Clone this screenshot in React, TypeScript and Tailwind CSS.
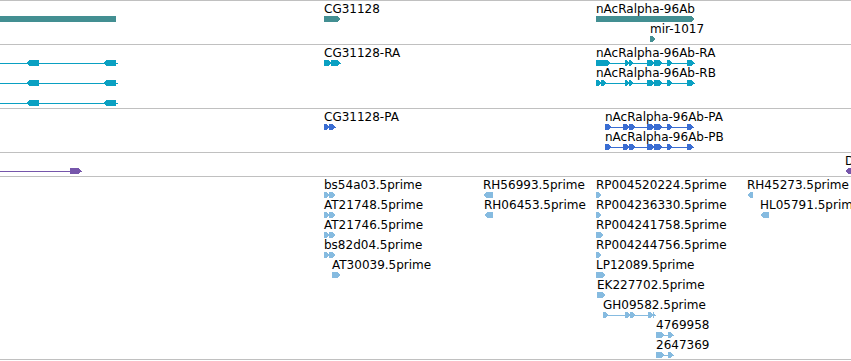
import React from 'react';

type Span = [number, number];

type Feature = {
  x: number;
  row: number;
  label?: string;
  w: number;
  exons: Span[];
  strand: 1 | -1 | 0;
  line?: boolean;
};

type Track = {
  height: string;
  color: string;
  features: Feature[];
};

const teal = '#438f92';
const cyan = '#0aa0c2';
const blue = '#3a6dd2';
const purple = '#7656ab';
const est = '#86bbe0';

function exonPoints([s, e]: Span, strand: number) {
  const tip = Math.min(3, (e - s) / 2);
  if (strand > 0) return `${s},0 ${e - tip},0 ${e},3 ${e - tip},6 ${s},6`;
  if (strand < 0) return `${s},3 ${s + tip},0 ${e},0 ${e},6 ${s + tip},6`;
  return `${s},0 ${e},0 ${e},6 ${s},6`;
}

function Glyph({ f, color }: { f: Feature; color: string }) {
  return (
    <svg width={f.w + 1} height={6} className="block" shapeRendering="crispEdges">
      {f.line && <rect x={0} y={3} width={f.w + 1} height={1} fill={color} />}
      {f.exons.map((ex, i) => (
        <polygon key={i} points={exonPoints(ex, f.strand)} fill={color} />
      ))}
    </svg>
  );
}

const dbl: Span[] = [[0, 5], [5, 11]];

const tracks: Track[] = [
  {
    height: 'h-[45px] border-t',
    color: teal,
    features: [
      { x: 0, row: 0, w: 116, exons: [[0, 116]], strand: 0 },
      { x: 324, row: 0, label: 'CG31128', w: 16, exons: [[0, 16]], strand: 1 },
      { x: 596, row: 0, label: 'nAcRalpha-96Ab', w: 98, exons: [[0, 98]], strand: 1 },
      { x: 650, row: 1, label: 'mir-1017', w: 5, exons: [[0, 5]], strand: 1 },
    ],
  },
  {
    height: 'h-[64px]',
    color: cyan,
    features: [
      ...[0, 1, 2].map(row => ({ x: 0, row, w: 117, exons: [[26, 39], [103, 116]] as Span[], strand: -1 as const, line: true })),
      { x: 324, row: 0, label: 'CG31128-RA', w: 16, exons: [[0, 7], [7, 16]], strand: 1, line: true },
      {
        x: 596, row: 0, label: 'nAcRalpha-96Ab-RA', w: 98, strand: 1, line: true,
        exons: [[0, 14], [29, 33], [33, 37], [51, 58], [58, 66], [71, 76], [91, 98]],
      },
      {
        x: 596, row: 1, label: 'nAcRalpha-96Ab-RB', w: 98, strand: 1, line: true,
        exons: [[0, 5], [5, 10], [29, 33], [33, 37], [51, 58], [58, 66], [71, 76], [91, 98]],
      },
    ],
  },
  {
    height: 'h-[44px]',
    color: blue,
    features: [
      { x: 324, row: 0, label: 'CG31128-PA', w: 11, exons: dbl, strand: 1, line: true },
      {
        x: 605, row: 0, label: 'nAcRalpha-96Ab-PA', w: 88, strand: 1, line: true,
        exons: [[0, 6], [18, 24], [24, 30], [42, 49], [49, 57], [62, 67], [82, 88]],
      },
      {
        x: 605, row: 1, label: 'nAcRalpha-96Ab-PB', w: 88, strand: 1, line: true,
        exons: [[0, 6], [18, 24], [24, 30], [42, 49], [49, 57], [62, 67], [82, 88]],
      },
    ],
  },
  {
    height: 'h-[24px]',
    color: purple,
    features: [
      { x: 0, row: 0, w: 81, exons: [[70, 81]], strand: 1, line: true },
      { x: 845, row: 0, label: 'D', w: 8, exons: [[0, 8]], strand: -1 },
    ],
  },
  {
    height: 'h-[183px]',
    color: est,
    features: [
      { x: 324, row: 0, label: 'bs54a03.5prime', w: 11, exons: dbl, strand: 1 },
      { x: 324, row: 1, label: 'AT21748.5prime', w: 11, exons: dbl, strand: 1 },
      { x: 324, row: 2, label: 'AT21746.5prime', w: 11, exons: dbl, strand: 1 },
      { x: 324, row: 3, label: 'bs82d04.5prime', w: 11, exons: dbl, strand: 1 },
      { x: 332, row: 4, label: 'AT30039.5prime', w: 8, exons: [[0, 8]], strand: 1 },
      { x: 483, row: 0, label: 'RH56993.5prime', w: 10, exons: [[0, 10]], strand: -1 },
      { x: 484, row: 1, label: 'RH06453.5prime', w: 9, exons: [[0, 9]], strand: -1 },
      { x: 596, row: 0, label: 'RP004520224.5prime', w: 5, exons: [[0, 5]], strand: 1 },
      { x: 596, row: 1, label: 'RP004236330.5prime', w: 5, exons: [[0, 5]], strand: 1 },
      { x: 596, row: 2, label: 'RP004241758.5prime', w: 7, exons: [[0, 7]], strand: 1 },
      { x: 596, row: 3, label: 'RP004244756.5prime', w: 5, exons: [[0, 5]], strand: 1 },
      { x: 596, row: 4, label: 'LP12089.5prime', w: 9, exons: [[0, 9]], strand: 1 },
      { x: 597, row: 5, label: 'EK227702.5prime', w: 8, exons: [[0, 8]], strand: 1 },
      {
        x: 603, row: 6, label: 'GH09582.5prime', w: 52, strand: 1, line: true,
        exons: [[0, 5], [22, 27], [27, 32], [45, 50], [50, 52]],
      },
      { x: 656, row: 7, label: '4769958', w: 17, exons: [[0, 8], [12, 17]], strand: 1, line: true },
      { x: 656, row: 8, label: '2647369', w: 17, exons: [[0, 8], [12, 17]], strand: 1, line: true },
      { x: 747, row: 0, label: 'RH45273.5prime', w: 6, exons: [[0, 6]], strand: -1 },
      { x: 760, row: 1, label: 'HL05791.5prime', w: 9, exons: [[0, 9]], strand: -1 },
    ],
  },
];

export default function App() {
  return (
    <div className="w-[851px] h-[361px] bg-white overflow-hidden font-['DejaVu_Sans',sans-serif] text-[12px] text-black">
      {tracks.map((t, ti) => (
        <div key={ti} className={`relative border-b border-[#c0c0c0] overflow-hidden ${t.height}`}>
          {t.features.map((f, fi) => (
            <div
              key={fi}
              className="absolute"
              style={{ left: f.x, top: 1 + f.row * 20 }}
            >
              <div className="h-[14px] leading-[14px] whitespace-nowrap">{f.label ?? ''}</div>
              <Glyph f={f} color={t.color} />
            </div>
          ))}
        </div>
      ))}
    </div>
  );
}
